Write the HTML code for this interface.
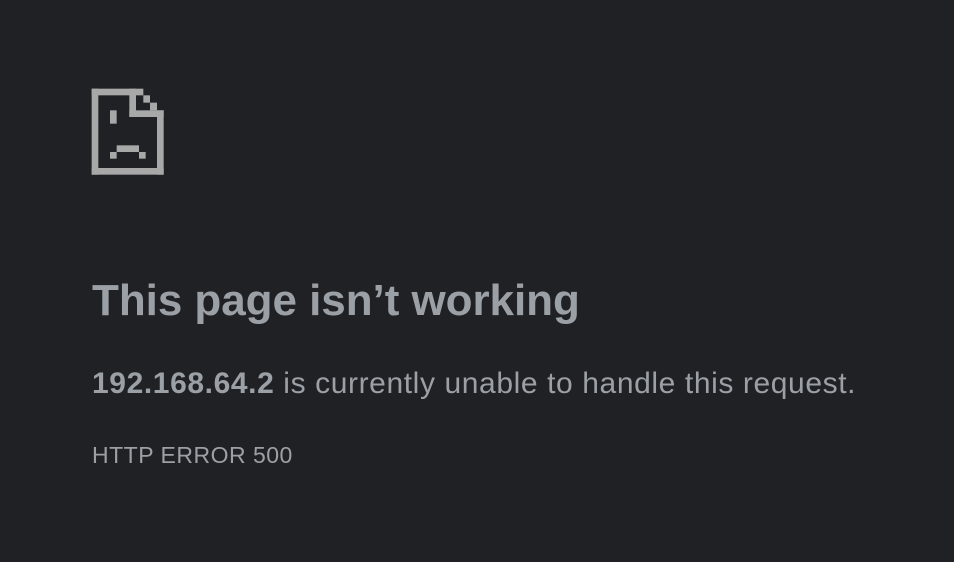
<!DOCTYPE html>
<html><head><meta charset="utf-8"><style>
html,body{margin:0;padding:0;background:#202124;width:954px;height:562px;overflow:hidden}
body{font-family:"Liberation Sans",sans-serif;color:#9aa0a6}
svg{position:absolute;left:85px;top:82px}
h1{position:absolute;left:92px;top:276px;margin:0;font-size:44px;font-weight:bold;color:#9aa0a6;letter-spacing:-0.05px;white-space:nowrap}
.p{position:absolute;left:92px;top:367px;font-size:30px;letter-spacing:0.6px;white-space:nowrap;color:#9aa0a6}
.e{position:absolute;left:92px;top:442px;font-size:23px;letter-spacing:0.5px;white-space:nowrap;color:#9aa0a6}
</style></head><body>
<svg width="90" height="100" viewBox="0 0 270 300" fill="#a8a8a8">
<rect x="20" y="20" width="20" height="258"/>
<rect x="20" y="258" width="216" height="20"/>
<rect x="20" y="20" width="155" height="20"/>
<rect x="216" y="85" width="20" height="193"/>
<rect x="133" y="20" width="20" height="85"/>
<rect x="133" y="85" width="103" height="20"/>
<rect x="175" y="40" width="20" height="22"/>
<rect x="195" y="62" width="21" height="23"/>
<rect x="75" y="85" width="20" height="40"/>
<rect x="95" y="190" width="67" height="20"/>
<rect x="75" y="210" width="20" height="20"/>
<rect x="162" y="210" width="20" height="20"/>
</svg>
<h1>This page isn’t working</h1>
<div class="p"><b>192.168.64.2</b> is currently unable to handle this request.</div>
<div class="e">HTTP ERROR 500</div>
</body></html>
